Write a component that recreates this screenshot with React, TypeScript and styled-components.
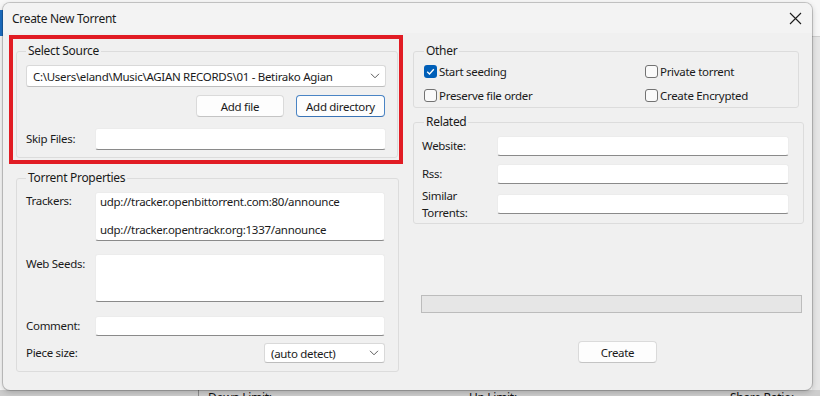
import styled, { createGlobalStyle } from "styled-components";

const GlobalStyle = createGlobalStyle`
    html, body {
        margin: 0;
        padding: 0;
    }
    body {
        font-family: "Noto Sans", "Open Sans", sans-serif;
        font-size: 11.5px;
        letter-spacing: -0.3px;
        color: #1a1a1a;
    }
    * {
        box-sizing: border-box;
    }
`;

const Chevron = () => (
    <svg width="10" height="6" viewBox="0 0 10 6">
        <path d="M1 0.8 L5 4.8 L9 0.8" fill="none" stroke="#5c5c5c" strokeWidth="1" />
    </svg>
);

const CloseIcon = () => (
    <svg width="13" height="13" viewBox="0 0 13 13">
        <path d="M1 1 L12 12 M12 1 L1 12" stroke="#1c1c1c" strokeWidth="1.1" />
    </svg>
);

const Check = ({ checked, label }: { checked?: boolean; label: string }) => (
    <CheckRow>
        <Box $checked={checked}>
            {checked && (
                <svg width="13" height="13" viewBox="0 0 13 13">
                    <path d="M3.2 6.8 L5.5 9 L9.8 4.3" fill="none" stroke="#fff" strokeWidth="1.3" />
                </svg>
            )}
        </Box>
        <span>{label}</span>
    </CheckRow>
);

const App = () => {
    return (
        <Page>
            <GlobalStyle />
            <Dialog>
                <TitleBar>
                    <span>Create New Torrent</span>
                    <CloseButton>
                        <CloseIcon />
                    </CloseButton>
                </TitleBar>
                <Body>
                    <LeftColumn>
                        <Highlight>
                            <Group $pad="6px 11px 7px 9px" $margin="0 1px 0 0">
                                <GroupTitle>Select Source</GroupTitle>
                                <Combo $width="100%">
                                    <span>C:\Users\eland\Music\AGIAN RECORDS\01 - Betirako Agian</span>
                                    <Chevron />
                                </Combo>
                                <ButtonRow>
                                    <Button $width={88}>Add file</Button>
                                    <Button $width={89} $primary>
                                        Add directory
                                    </Button>
                                </ButtonRow>
                                <FieldRow $label={69} $top={11}>
                                    <Label>Skip Files:</Label>
                                    <Input $height={22} defaultValue="" />
                                </FieldRow>
                            </Group>
                        </Highlight>
                        <Group $pad="6px 13px 8px 9px" $margin="6px 4px 0 7px">
                            <GroupTitle>Torrent Properties</GroupTitle>
                            <FieldRow $label={69} $align="flex-start">
                                <Label $offset={1}>Trackers:</Label>
                                <Area
                                    $height={49}
                                    defaultValue={
                                        "udp://tracker.openbittorrent.com:80/announce\n\nudp://tracker.opentrackr.org:1337/announce"
                                    }
                                />
                            </FieldRow>
                            <FieldRow $label={69} $align="flex-start" $top={13}>
                                <Label $offset={2}>Web Seeds:</Label>
                                <Area $height={48} defaultValue="" />
                            </FieldRow>
                            <FieldRow $label={69} $top={14}>
                                <Label>Comment:</Label>
                                <Input $height={20} defaultValue="" />
                            </FieldRow>
                            <FieldRow $label={69} $top={7}>
                                <Label>Piece size:</Label>
                                <Spacer />
                                <Combo $width="121px" $height={20}>
                                    <span>(auto detect)</span>
                                    <Chevron />
                                </Combo>
                            </FieldRow>
                        </Group>
                    </LeftColumn>
                    <RightColumn>
                        <Group $pad="2px 8px 2px 10px" $margin="8px 5px 0 0">
                            <GroupTitle>Other</GroupTitle>
                            <CheckGrid>
                                <Check checked label="Start seeding" />
                                <Check label="Private torrent" />
                                <Check label="Preserve file order" />
                                <Check label="Create Encrypted" />
                            </CheckGrid>
                        </Group>
                        <Group $pad="6px 14px 2px 8px" $margin="6px 0 0 0">
                            <GroupTitle $indent={2}>Related</GroupTitle>
                            <FieldRow $label={75}>
                                <Label>Website:</Label>
                                <Input $height={20} defaultValue="" />
                            </FieldRow>
                            <FieldRow $label={75} $top={8}>
                                <Label>Rss:</Label>
                                <Input $height={20} defaultValue="" />
                            </FieldRow>
                            <FieldRow $label={75} $top={3}>
                                <Label $lines={17}>
                                    Similar
                                    <br />
                                    Torrents:
                                </Label>
                                <Input $height={20} defaultValue="" />
                            </FieldRow>
                        </Group>
                        <Progress />
                        <CreateButton>Create</CreateButton>
                    </RightColumn>
                </Body>
            </Dialog>
            <BackStrip>
                <BackCell $divider>Down Limit:</BackCell>
                <BackCell>Up Limit:</BackCell>
                <BackCell>Share Ratio:</BackCell>
            </BackStrip>
        </Page>
    );
};

const Page = styled.div`
    width: 820px;
    height: 396px;
    overflow: hidden;
    display: flex;
    flex-direction: column;
    background:
        linear-gradient(#1d6fc4, #1d6fc4) 0 10px / 3px 26px no-repeat,
        linear-gradient(#cfcfcf, #cfcfcf) 812px 36px / 8px 1px no-repeat,
        linear-gradient(#e6e6e6, #e6e6e6) 812px 37px / 8px 360px no-repeat,
        #f7f7f7;
`;

const Dialog = styled.div`
    position: relative;
    z-index: 1;
    flex-shrink: 0;
    width: 809px;
    height: 387px;
    margin: 3px 8px 0 3px;
    background: #f0f0f0;
    border-radius: 7px;
    box-shadow:
        0 0 0 1px rgba(0, 0, 0, 0.18),
        0 2px 6px rgba(0, 0, 0, 0.22);
    overflow: hidden;
`;

const TitleBar = styled.div`
    height: 30px;
    display: flex;
    align-items: center;
    justify-content: space-between;
    padding: 0 0 0 9px;
    background: #f3f3f3;
    color: #1a1a1a;
    font-size: 12px;
`;

const CloseButton = styled.div`
    width: 46px;
    height: 30px;
    display: flex;
    align-items: center;
    justify-content: center;
    margin-right: -6px;
`;

const Body = styled.div`
    display: grid;
    grid-template-columns: 394px 391px;
    column-gap: 10px;
    padding: 2px 0 0 6px;
`;

const LeftColumn = styled.div`
    display: flex;
    flex-direction: column;
`;

const RightColumn = styled.div`
    display: flex;
    flex-direction: column;
`;

const Highlight = styled.div`
    height: 129px;
    border: 4px solid #e11c24;
    padding: 4px 0 0 3px;
    display: flex;
    flex-direction: column;
`;

const Group = styled.fieldset<{ $pad: string; $margin: string }>`
    margin: ${(p) => p.$margin};
    padding: ${(p) => p.$pad};
    min-width: 0;
    border: 1px solid #dcdcdc;
    border-radius: 3px;
    display: flex;
    flex-direction: column;
`;

const GroupTitle = styled.legend<{ $indent?: number }>`
    padding: 0 2px;
    margin-left: ${(p) => p.$indent ?? 0}px;
    line-height: 16px;
    font-size: 12px;
    color: #1a1a1a;
`;

const Combo = styled.div<{ $width: string; $height?: number }>`
    width: ${(p) => p.$width};
    height: ${(p) => p.$height ?? 22}px;
    display: flex;
    align-items: center;
    justify-content: space-between;
    padding: 0 5px 0 6px;
    background: #ffffff;
    border: 1px solid #d9d9d9;
    border-bottom-color: #bdbdbd;
    border-radius: 3px;
    white-space: nowrap;
    span {
        overflow: hidden;
    }
`;

const ButtonRow = styled.div`
    display: flex;
    justify-content: flex-end;
    gap: 12px;
    margin: 8px 1px 0 0;
`;

const Button = styled.div<{ $width: number; $primary?: boolean }>`
    width: ${(p) => p.$width}px;
    height: 22px;
    display: flex;
    align-items: center;
    justify-content: center;
    background: #fdfdfd;
    border: 1px solid ${(p) => (p.$primary ? "#4a84c4" : "#dadada")};
    border-bottom-color: ${(p) => (p.$primary ? "#3a74b6" : "#c4c4c4")};
    border-radius: 4px;
    color: #1a1a1a;
`;

const FieldRow = styled.div<{ $label: number; $top?: number; $align?: string }>`
    display: grid;
    grid-template-columns: ${(p) => p.$label}px 1fr auto;
    align-items: ${(p) => p.$align ?? "center"};
    margin-top: ${(p) => p.$top ?? 0}px;
    & > :last-child {
        grid-column: ${(p) => (p.$align ? "2 / 4" : "auto")};
    }
`;

const Label = styled.div<{ $offset?: number; $lines?: number }>`
    line-height: ${(p) => p.$lines ?? 16}px;
    padding-top: ${(p) => p.$offset ?? 0}px;
    color: #1a1a1a;
    white-space: nowrap;
`;

const Spacer = styled.div``;

const Input = styled.input<{ $height: number }>`
    grid-column: 2 / 4;
    width: 100%;
    height: ${(p) => p.$height}px;
    background: #ffffff;
    border: 1px solid #ececec;
    border-bottom: 1px solid #8a8a8a;
    border-radius: 3px;
    outline: none;
`;

const Area = styled.textarea<{ $height: number }>`
    width: 100%;
    height: ${(p) => p.$height}px;
    padding: 2px 4px;
    font-family: "Noto Sans", "Open Sans", sans-serif;
    font-size: 11.5px;
    letter-spacing: -0.3px;
    line-height: 14px;
    color: #1a1a1a;
    background: #ffffff;
    border: 1px solid #ececec;
    border-bottom: 1px solid #8a8a8a;
    border-radius: 3px;
    resize: none;
    overflow: hidden;
    outline: none;
`;

const CheckGrid = styled.div`
    display: grid;
    grid-template-columns: 221px 1fr;
    row-gap: 4px;
`;

const CheckRow = styled.div`
    height: 20px;
    display: flex;
    align-items: center;
    gap: 2px;
    white-space: nowrap;
`;

const Box = styled.span<{ $checked?: boolean }>`
    width: 13px;
    height: 13px;
    display: flex;
    border-radius: 3px;
    background: ${(p) => (p.$checked ? "#005fb8" : "#fafafa")};
    border: ${(p) => (p.$checked ? "none" : "1px solid #727272")};
`;

const Progress = styled.div`
    width: 381px;
    height: 18px;
    margin: 71px 0 0 8px;
    background: #e6e6e6;
    border: 1px solid #bcbcbc;
`;

const CreateButton = styled.div`
    width: 79px;
    height: 22px;
    margin: 28px 0 0 165px;
    display: flex;
    align-items: center;
    justify-content: center;
    background: #fdfdfd;
    border: 1px solid #dadada;
    border-bottom-color: #c4c4c4;
    border-radius: 4px;
`;

const BackStrip = styled.div`
    flex: 1;
    display: flex;
    padding-left: 198px;
    background: #cdcdcd;
    line-height: 14px;
    font-size: 12px;
`;

const BackCell = styled.div<{ $divider?: boolean }>`
    flex: 0 0 261px;
    padding: 1px 0 0 9px;
    border-left: 1px solid ${(p) => (p.$divider ? "#8c8c8c" : "transparent")};
    color: #111111;
    white-space: nowrap;
`;

export default App;
